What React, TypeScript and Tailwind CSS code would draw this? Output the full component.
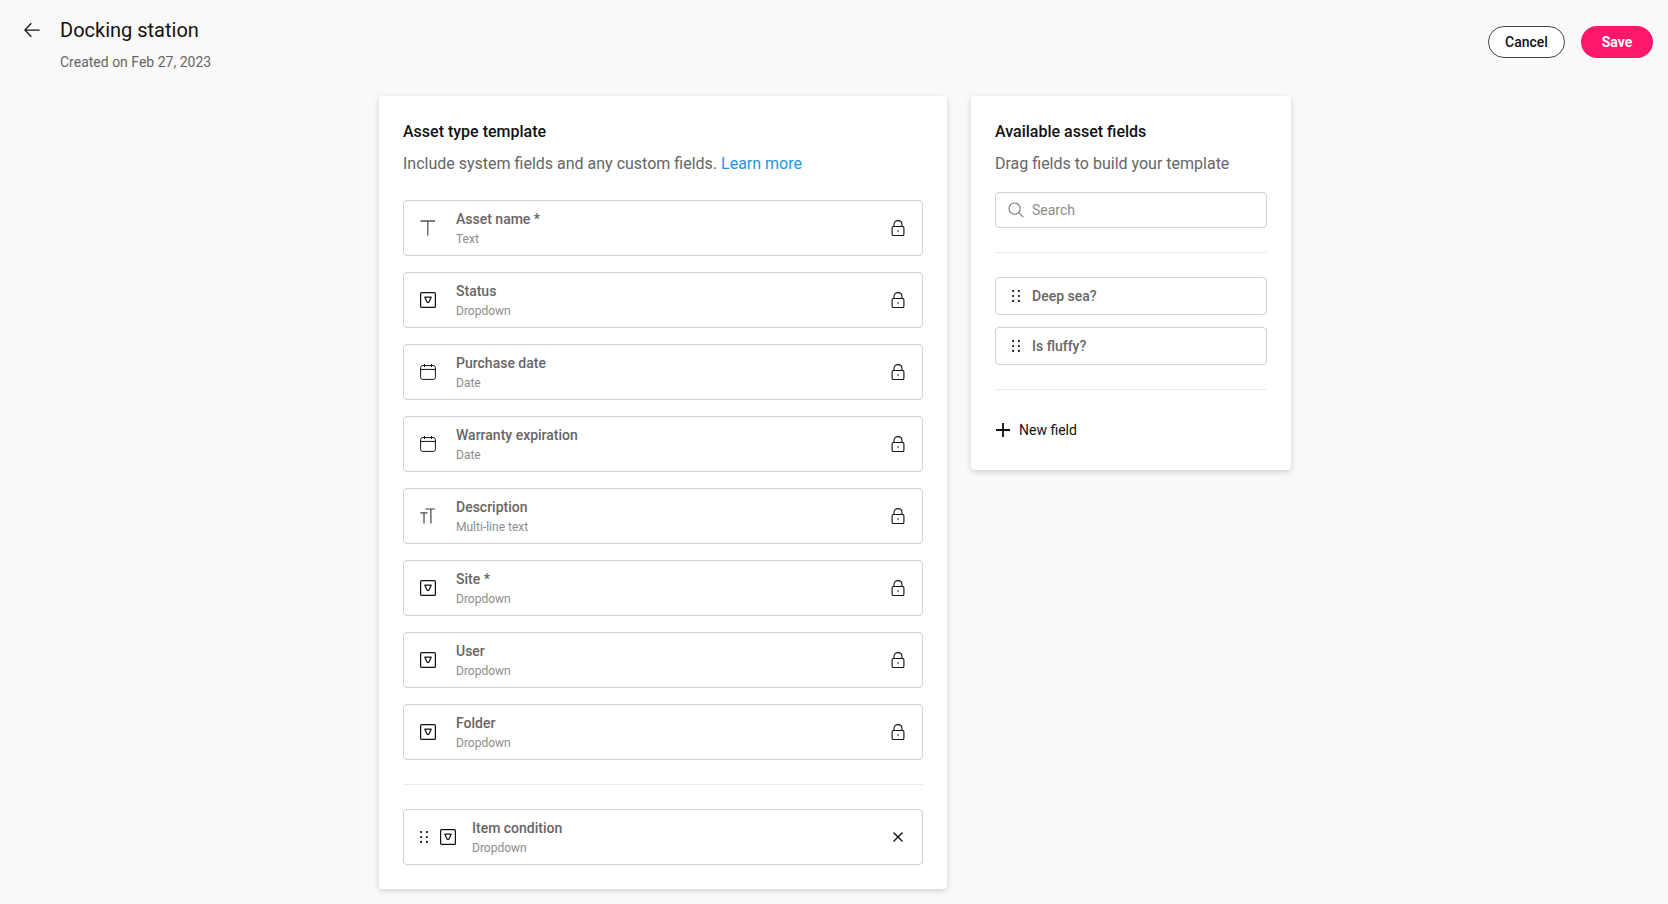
import { useState } from 'react';

type FieldType = 'Text' | 'Dropdown' | 'Date' | 'Multi-line text';
type Field = { id: string; name: string; type: FieldType };

const SYSTEM_FIELDS: Field[] = [
  { id: 'name', name: 'Asset name *', type: 'Text' },
  { id: 'status', name: 'Status', type: 'Dropdown' },
  { id: 'purchase', name: 'Purchase date', type: 'Date' },
  { id: 'warranty', name: 'Warranty expiration', type: 'Date' },
  { id: 'description', name: 'Description', type: 'Multi-line text' },
  { id: 'site', name: 'Site *', type: 'Dropdown' },
  { id: 'user', name: 'User', type: 'Dropdown' },
  { id: 'folder', name: 'Folder', type: 'Dropdown' },
];

const AVAILABLE_FIELDS = ['Deep sea?', 'Is fluffy?'];

function BackIcon() {
  return (
    <svg width="16" height="16" viewBox="0 0 16 16" fill="none" stroke="currentColor" strokeWidth="1.25" aria-hidden="true">
      <path d="M7.3 1.2 .9 8l6.4 6.8M1 8h14.6" />
    </svg>
  );
}

function FieldIcon({ type }: { type: FieldType }) {
  return (
    <span className="flex size-6 shrink-0 items-center justify-center">
      <svg width="16" height="16" viewBox="0 0 16 16" fill="none" stroke="currentColor" aria-hidden="true">
        {type === 'Text' && <path d="M.4 1h14.6M7.8 1v14.6" stroke="#555" strokeWidth="1.3" />}
        {type === 'Dropdown' && (
          <>
            <rect x=".6" y=".6" width="14.8" height="14.8" rx="1" strokeWidth="1.2" />
            <path d="M4.8 5.2h6.4L8.7 10.5H7.3z" strokeWidth="1.2" strokeLinejoin="round" />
          </>
        )}
        {type === 'Date' && (
          <>
            <rect x=".6" y="1.6" width="14.8" height="13.8" rx="2" />
            <path d="M.6 5.4h14.8M4.5 0v3M11.5 0v3" />
          </>
        )}
        {type === 'Multi-line text' && <path d="M5.4 1h9.6M10.9 1v14.5M.3 4.9h7.2M4 4.9v10.6" stroke="#444" strokeWidth="1.2" />}
      </svg>
    </span>
  );
}

function GripIcon() {
  return (
    <span className="flex w-4 shrink-0 cursor-grab items-center justify-center">
      <svg width="8" height="12" viewBox="0 0 8 12" fill="currentColor" aria-hidden="true">
        {[1.1, 6, 10.9].map((y) => (
          <g key={y}>
            <circle cx="1.1" cy={y} r="1.1" />
            <circle cx="6.9" cy={y} r="1.1" />
          </g>
        ))}
      </svg>
    </span>
  );
}

function LockIcon() {
  return (
    <span className="flex size-6 shrink-0 items-center justify-center">
      <svg width="14" height="16" viewBox="0 0 14 16" fill="none" stroke="currentColor" strokeWidth="1.1" aria-hidden="true">
        <rect x="1.1" y="6.5" width="11.8" height="9" rx="1.2" />
        <path d="M3 6.5V4.6C3 2.2 4.7.6 7 .6s4 1.6 4 4v1.9" />
        <circle cx="7" cy="11" r=".8" fill="currentColor" stroke="none" />
      </svg>
    </span>
  );
}

function FieldText({ field }: { field: Field }) {
  return (
    <div className="min-w-0 flex-1 pt-0.5">
      <p className="text-sm leading-5 font-medium text-[#666]">{field.name}</p>
      <p className="text-xs leading-5 text-[#8c8c8c]">{field.type}</p>
    </div>
  );
}

export default function App() {
  const [query, setQuery] = useState('');
  const [condition, setCondition] = useState(true);

  const available = AVAILABLE_FIELDS.filter((name) => name.toLowerCase().includes(query.toLowerCase()));

  return (
    <div className="min-h-screen bg-[#f9f9f9] font-[Roboto,sans-serif] text-[#111]">
      <header className="flex items-start justify-between pt-4 pr-[15px] pb-6 pl-6">
        <div className="flex gap-5">
          <button type="button" aria-label="Back" className="flex h-7 items-center">
            <BackIcon />
          </button>
          <div>
            <h1 className="text-xl leading-7">Docking station</h1>
            <p className="mt-2 text-sm leading-5 text-[#666]">Created on Feb 27, 2023</p>
          </div>
        </div>
        <div className="flex gap-4 pt-2.5">
          <button type="button" className="h-8 min-w-[77px] rounded-full border border-[#444] bg-white px-4 text-sm font-medium">Cancel</button>
          <button type="button" className="h-8 min-w-[72px] rounded-full bg-[#ff176b] px-5 text-sm font-bold text-white">Save</button>
        </div>
      </header>

      <main className="flex items-start justify-center gap-6 pr-3.5 pb-[15px] pl-4">
        <section className="w-full max-w-[568px] rounded bg-white p-6 shadow-[0_2px_6px_rgba(0,0,0,0.16)]">
          <h2 className="leading-6 font-medium">Asset type template</h2>
          <p className="mt-2 leading-6 text-[#666]">
            Include system fields and any custom fields. <a href="#learn" className="text-[#2196e3]">Learn more</a>
          </p>

          <ul className="mt-6 space-y-4">
            {SYSTEM_FIELDS.map((field) => (
              <li key={field.id} className="flex h-14 items-center rounded border border-[#d0d0d0] px-3">
                <div className="flex min-w-0 flex-1 items-center gap-4">
                  <FieldIcon type={field.type} />
                  <FieldText field={field} />
                </div>
                <LockIcon />
              </li>
            ))}
          </ul>

          {condition && (
            <>
              <hr className="my-6 border-[#ebebeb]" />
              <div className="flex h-14 items-center rounded border border-[#d0d0d0] px-3">
                <div className="flex min-w-0 flex-1 items-center gap-3">
                  <div className="flex items-center gap-1">
                    <GripIcon />
                    <FieldIcon type="Dropdown" />
                  </div>
                  <FieldText field={{ id: 'condition', name: 'Item condition', type: 'Dropdown' }} />
                </div>
                <button type="button" aria-label="Remove Item condition" onClick={() => setCondition(false)} className="flex size-6 items-center justify-center">
                  <svg width="10" height="10" viewBox="0 0 10 10" stroke="currentColor" strokeWidth="1.4" aria-hidden="true">
                    <path d="m.5.5 9 9m0-9-9 9" />
                  </svg>
                </button>
              </div>
            </>
          )}
        </section>

        <aside className="w-80 shrink-0 rounded bg-white p-6 shadow-[0_2px_6px_rgba(0,0,0,0.16)]">
          <h2 className="leading-6 font-medium">Available asset fields</h2>
          <p className="mt-2 leading-6 text-[#666]">Drag fields to build your template</p>

          <label className="mt-4 flex h-9 items-center gap-2 rounded border border-[#d0d0d0] px-3">
            <svg width="16" height="16" viewBox="0 0 16 16" fill="none" stroke="#777" strokeWidth="1.1" aria-hidden="true">
              <circle cx="6.6" cy="6.6" r="5.6" />
              <path d="m10.7 10.7 4.6 4.4" />
            </svg>
            <input
              type="text"
              aria-label="Search"
              placeholder="Search"
              value={query}
              onChange={(e) => setQuery(e.target.value)}
              className="min-w-0 flex-1 text-sm outline-none placeholder:text-[#8c8c8c]"
            />
          </label>

          <hr className="my-6 border-[#ebebeb]" />

          <ul className="space-y-3">
            {available.map((name) => (
              <li key={name} className="flex h-[38px] items-center gap-2 rounded border border-[#d0d0d0] px-3 text-sm font-medium text-[#666]">
                <span className="flex text-[#111]"><GripIcon /></span>
                {name}
              </li>
            ))}
          </ul>

          <hr className="my-6 border-[#ebebeb]" />

          <button type="button" className="flex h-8 items-center gap-2 text-sm">
            <svg width="16" height="16" viewBox="0 0 16 16" stroke="currentColor" strokeWidth="1.8" aria-hidden="true">
              <path d="M8 1v14M1 8h14" />
            </svg>
            New field
          </button>
        </aside>
      </main>
    </div>
  );
}
